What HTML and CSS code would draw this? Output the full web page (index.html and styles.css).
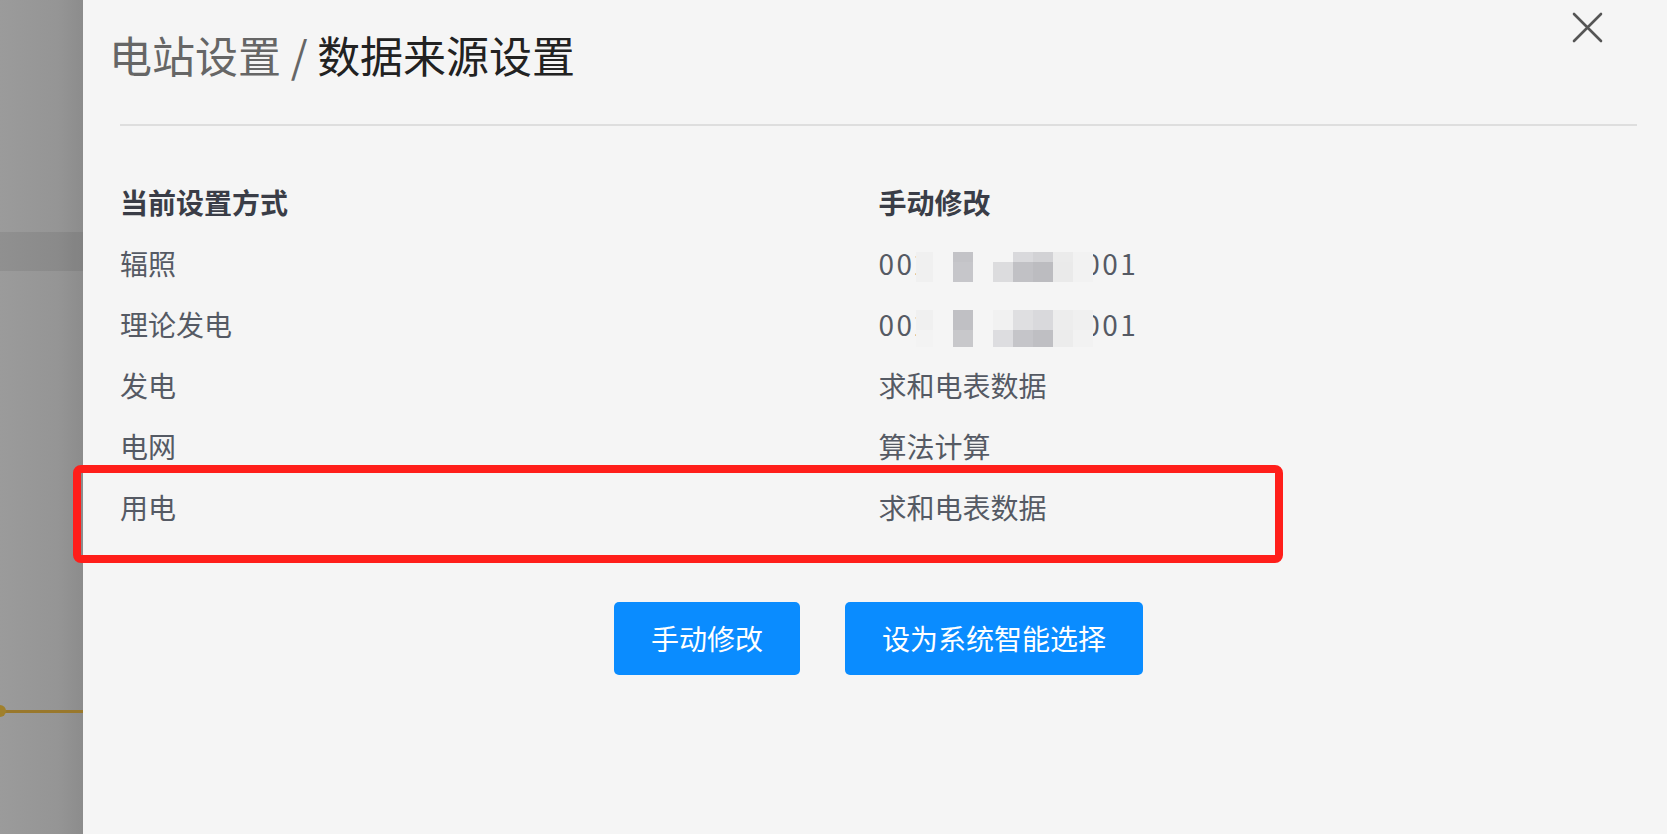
FILE: index.html
```html
<!DOCTYPE html>
<html lang="zh-CN">
<head>
<meta charset="utf-8">
<title>数据来源设置</title>
<link rel="stylesheet" href="styles.css">
</head>
<body>
<div class="page">
  <div class="overlay">
    <div class="overlay-band"></div>
    <div class="overlay-line"><span class="overlay-dot"></span></div>
  </div>
  <div class="drawer">
    <div class="close" aria-label="关闭">
      <svg width="31" height="31" viewBox="0 0 31 31"><path d="M2 2 L29 29 M29 2 L2 29" stroke="#555" stroke-width="2.6" stroke-linecap="round" fill="none"/></svg>
    </div>
    <div class="header">
      <h1 class="title"><span class="crumb">电站设置 / </span><span class="current">数据来源设置</span></h1>
    </div>
    <div class="table">
      <div class="cell head">当前设置方式</div>
      <div class="cell head">手动修改</div>

      <div class="cell">辐照</div>
      <div class="cell"><span class="num">002</span><span class="mosaic m1"><i style="background:#f0f0f0"></i><i></i><i style="background:#c3c3c7"></i><i></i><i></i><i style="background:#d9d9dc"></i><i style="background:#d2d2d5"></i><i style="background:#ebebeb"></i><i style="background:#f2f2f2"></i><i style="background:#f0f0f0"></i><i></i><i style="background:#c6c6ca"></i><i></i><i style="background:#dcdcde"></i><i style="background:#c1c1c5"></i><i style="background:#bcbcc0"></i><i style="background:#eaeaea"></i><i style="background:#f2f2f2"></i></span><span class="num">001</span></div>

      <div class="cell">理论发电</div>
      <div class="cell"><span class="num">002</span><span class="mosaic m2"><i style="background:#f0f0f0"></i><i></i><i style="background:#c0c0c4"></i><i></i><i style="background:#f1f1f1"></i><i style="background:#dfdfe1"></i><i style="background:#d9d9dc"></i><i style="background:#ededed"></i><i style="background:#f0f0f0"></i><i style="background:#f3f3f3"></i><i></i><i style="background:#c8c8cb"></i><i></i><i style="background:#dddde0"></i><i style="background:#c5c5c9"></i><i style="background:#bfbfc3"></i><i style="background:#ececec"></i><i style="background:#f2f2f2"></i></span><span class="num">001</span></div>

      <div class="cell">发电</div>
      <div class="cell">求和电表数据</div>

      <div class="cell">电网</div>
      <div class="cell">算法计算</div>

      <div class="cell">用电</div>
      <div class="cell">求和电表数据</div>
    </div>
    <div class="actions">
      <button class="btn">手动修改</button>
      <button class="btn">设为系统智能选择</button>
    </div>
    <div class="highlight"></div>
  </div>
</div>
</body>
</html>
```

FILE: styles.css
```css
html, body {
  margin: 0;
  padding: 0;
}
body {
  width: 1667px;
  height: 834px;
  overflow: hidden;
  font-family: "Noto Sans CJK SC", "Noto Sans", sans-serif;
  background: #f5f5f5;
}
.page {
  display: flex;
  width: 1667px;
  height: 834px;
}
.overlay {
  width: 83px;
  flex: none;
  height: 100%;
  background: linear-gradient(to right, #9b9b9b 0%, #959595 70%, #8c8c8c 100%);
  padding-top: 232px;
  box-sizing: border-box;
}
.overlay-band {
  height: 39px;
  background: rgba(0, 0, 0, 0.07);
}
.overlay-line {
  margin-top: 439px;
  height: 3px;
  background: #99782c;
  position: relative;
}
.overlay-dot {
  position: absolute;
  left: -6px;
  top: -5px;
  width: 12px;
  height: 12px;
  border-radius: 50%;
  background: #a0802c;
}
.drawer {
  flex: 1;
  position: relative;
  background: #f5f5f5;
  padding: 0 30px 0 37px;
}
.close {
  position: absolute;
  top: 12px;
  right: 64px;
  width: 31px;
  height: 31px;
}
.close svg {
  display: block;
}
.header {
  height: 126px;
  border-bottom: 2px solid #dedede;
  box-sizing: border-box;
  display: flex;
  align-items: center;
  padding-bottom: 16px;
}
.title {
  margin: 0;
  font-size: 43px;
  font-weight: normal;
  line-height: 1;
  margin-left: -11px;
}
.crumb {
  color: #666;
}
.current {
  color: #222;
}
.table {
  display: grid;
  grid-template-columns: 1fr 1fr;
  margin-top: 46px;
}
.cell {
  height: 61px;
  line-height: 61px;
  font-size: 28px;
  color: #555a64;
  white-space: nowrap;
}
.cell.head {
  font-weight: bold;
  color: #3a3d47;
}
.num {
  letter-spacing: 2.4px;
}
.mosaic {
  display: inline-grid;
  grid-template-columns: 17px repeat(8, 20px);
  grid-template-rows: 10px 20px;
  vertical-align: middle;
  margin-left: -16px;
  margin-right: -9px;
  position: relative;
  z-index: 1;
}
.mosaic.m2 {
  grid-template-rows: 20px 17px;
}
.mosaic i {
  display: block;
  background: #f5f5f5;
}
.actions {
  display: flex;
  justify-content: center;
  gap: 45px;
  margin-top: 64px;
}
.btn {
  height: 73px;
  padding: 0 37px;
  border: none;
  border-radius: 5px;
  background: #0a8cff;
  color: #fff;
  font-family: "Noto Sans CJK SC", sans-serif;
  font-size: 28px;
  line-height: 73px;
}
.highlight {
  position: absolute;
  left: -10px;
  top: 465px;
  width: 1210px;
  height: 98px;
  border: 8px solid #ff1e1a;
  border-radius: 8px;
  box-sizing: border-box;
}
```
